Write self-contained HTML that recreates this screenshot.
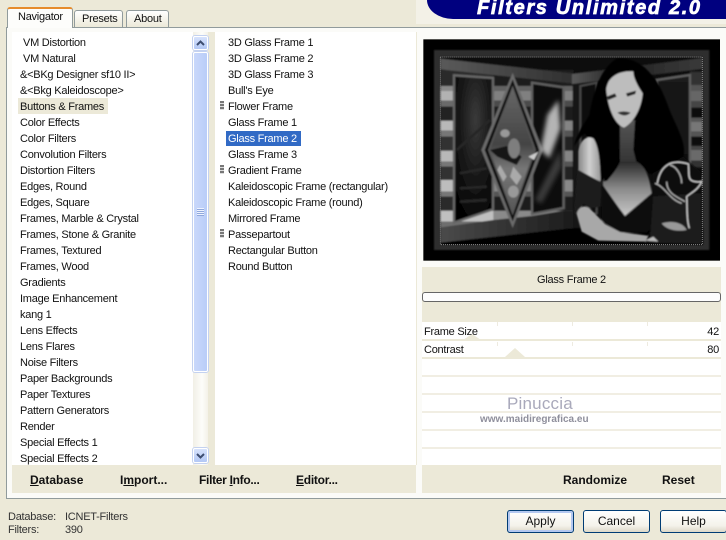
<!DOCTYPE html>
<html><head><meta charset="utf-8">
<style>
*{box-sizing:border-box}
html,body{margin:0;padding:0}
body{width:726px;height:540px;overflow:hidden;background:#ece9d8;position:relative;font-family:"Liberation Sans",sans-serif;font-size:11px;color:#111}
.a{position:absolute}
.t{position:absolute;white-space:nowrap;line-height:18px;height:16px;letter-spacing:-.25px}
.b{font-weight:bold;font-size:12px;color:#111;line-height:16px;letter-spacing:0}
.b u{text-decoration:underline}
.btn{position:absolute;top:510px;height:23px;border:1px solid #003c74;border-radius:3px;background:linear-gradient(#fff,#f4f2ea 70%,#dcd8c8);text-align:center;font-size:12px;line-height:21px;color:#111}
.row{position:absolute;left:422px;width:299px;height:2px;background:#f1eee3}
.tick{position:absolute;width:1px;height:4px;background:#eeebe0}
.sb{position:absolute;left:193px;width:15px;border:1px solid #fff;border-radius:2px;background:linear-gradient(90deg,#c9d8fb,#b9cdf8);box-shadow:0 0 0 1px #c4d2f0}
.bul{position:absolute;left:220px;width:4px;height:9px;background:repeating-linear-gradient(#777 0 2px,#ddd 2px 3px)}
</style></head><body>
<!-- banner -->
<div class="a" style="left:416px;top:0;width:310px;height:24px;background:#f3f1e7"></div>
<div class="a" style="left:427px;top:0;width:299px;height:19px;background:#00007f;border-bottom-left-radius:26px 19px"></div>
<div class="t" style="left:477px;top:-2px;height:20px;line-height:20px;color:#fff;font-weight:bold;font-style:italic;font-size:20px;letter-spacing:1.65px;-webkit-text-stroke:.7px #fff">Filters Unlimited 2.0</div>

<!-- tab panel -->
<div class="a" style="left:6px;top:27px;width:730px;height:472px;border:1px solid #919b9c;background:#fbfbf8"></div>

<!-- tabs -->
<div class="a" style="left:74px;top:10px;width:49px;height:17px;border:1px solid #919b9c;border-bottom:0;border-radius:3px 3px 0 0;background:linear-gradient(#fff,#ece9d8)"></div>
<div class="a" style="left:126px;top:10px;width:43px;height:17px;border:1px solid #919b9c;border-bottom:0;border-radius:3px 3px 0 0;background:linear-gradient(#fff,#ece9d8)"></div>
<div class="a" style="left:7px;top:7px;width:66px;height:21px;background:#fdfdfb;border:1px solid #919b9c;border-top:2px solid #e68b2c;border-bottom:0;border-radius:3px 3px 0 0"></div>
<div class="t" style="left:18px;top:8px">Navigator</div>
<div class="t" style="left:82px;top:10px">Presets</div>
<div class="t" style="left:134px;top:10px">About</div>

<!-- list backgrounds -->
<div class="a" style="left:12px;top:32px;width:181px;height:433px;background:#fff"></div>
<div class="a" style="left:208px;top:32px;width:7px;height:433px;background:#ece9d8"></div>
<div class="a" style="left:215px;top:32px;width:201px;height:433px;background:#fff"></div>
<div class="a" style="left:416px;top:32px;width:1px;height:433px;background:#ece9d8"></div>

<!-- scrollbar -->
<div class="a" style="left:193px;top:32px;width:15px;height:433px;background:linear-gradient(90deg,#f1efe6,#fdfdfa 60%,#f3f1e8)"></div>
<div class="sb" style="top:52px;height:320px"></div>
<div class="sb" style="top:36px;height:14px;background:linear-gradient(#d6e2fc,#b3c8f5)"></div>
<div class="sb" style="top:448px;height:15px;background:linear-gradient(#d6e2fc,#b3c8f5)"></div>
<svg class="a" style="left:193px;top:36px" width="15" height="14"><path d="M4 9 7.5 5.5 11 9" fill="none" stroke="#3d4d70" stroke-width="2"/></svg>
<svg class="a" style="left:193px;top:448px" width="15" height="15"><path d="M4 6 7.5 9.5 11 6" fill="none" stroke="#3d4d70" stroke-width="2"/></svg>
<div class="a" style="left:197px;top:208px;width:7px;height:8px;background:repeating-linear-gradient(#eef3ff 0 1px,#8fa8dd 1px 2px)"></div>

<!-- left list -->
<div class="a" style="left:18px;top:98px;width:90px;height:16px;background:#ece9d8"></div>
<div class="t" style="left:23px;top:34px">VM Distortion</div>
<div class="t" style="left:23px;top:50px">VM Natural</div>
<div class="t" style="left:20px;top:66px">&amp;&lt;BKg Designer sf10 II&gt;</div>
<div class="t" style="left:20px;top:82px">&amp;&lt;Bkg Kaleidoscope&gt;</div>
<div class="t" style="left:20px;top:98px">Buttons &amp; Frames</div>
<div class="t" style="left:20px;top:114px">Color Effects</div>
<div class="t" style="left:20px;top:130px">Color Filters</div>
<div class="t" style="left:20px;top:146px">Convolution Filters</div>
<div class="t" style="left:20px;top:162px">Distortion Filters</div>
<div class="t" style="left:20px;top:178px">Edges, Round</div>
<div class="t" style="left:20px;top:194px">Edges, Square</div>
<div class="t" style="left:20px;top:210px">Frames, Marble &amp; Crystal</div>
<div class="t" style="left:20px;top:226px">Frames, Stone &amp; Granite</div>
<div class="t" style="left:20px;top:242px">Frames, Textured</div>
<div class="t" style="left:20px;top:258px">Frames, Wood</div>
<div class="t" style="left:20px;top:274px">Gradients</div>
<div class="t" style="left:20px;top:290px">Image Enhancement</div>
<div class="t" style="left:20px;top:306px">kang 1</div>
<div class="t" style="left:20px;top:322px">Lens Effects</div>
<div class="t" style="left:20px;top:338px">Lens Flares</div>
<div class="t" style="left:20px;top:354px">Noise Filters</div>
<div class="t" style="left:20px;top:370px">Paper Backgrounds</div>
<div class="t" style="left:20px;top:386px">Paper Textures</div>
<div class="t" style="left:20px;top:402px">Pattern Generators</div>
<div class="t" style="left:20px;top:418px">Render</div>
<div class="t" style="left:20px;top:434px">Special Effects 1</div>
<div class="t" style="left:20px;top:450px">Special Effects 2</div>

<!-- middle list -->
<div class="a" style="left:226px;top:131px;width:75px;height:15px;background:#316ac5"></div>
<div class="bul" style="top:101px"></div>
<div class="bul" style="top:165px"></div>
<div class="bul" style="top:229px"></div>
<div class="t" style="left:228px;top:34px">3D Glass Frame 1</div>
<div class="t" style="left:228px;top:50px">3D Glass Frame 2</div>
<div class="t" style="left:228px;top:66px">3D Glass Frame 3</div>
<div class="t" style="left:228px;top:82px">Bull's Eye</div>
<div class="t" style="left:228px;top:98px">Flower Frame</div>
<div class="t" style="left:228px;top:114px">Glass Frame 1</div>
<div class="t" style="left:228px;top:130px;color:#fff">Glass Frame 2</div>
<div class="t" style="left:228px;top:146px">Glass Frame 3</div>
<div class="t" style="left:228px;top:162px">Gradient Frame</div>
<div class="t" style="left:228px;top:178px">Kaleidoscopic Frame (rectangular)</div>
<div class="t" style="left:228px;top:194px">Kaleidoscopic Frame (round)</div>
<div class="t" style="left:228px;top:210px">Mirrored Frame</div>
<div class="t" style="left:228px;top:226px">Passepartout</div>
<div class="t" style="left:228px;top:242px">Rectangular Button</div>
<div class="t" style="left:228px;top:258px">Round Button</div>

<!-- preview -->
<svg class="a" style="left:410px;top:0" width="316" height="270" viewBox="0 0 948 810">
<defs>
<filter id="s" x="-5%" y="-5%" width="110%" height="110%"><feGaussianBlur stdDeviation="2.2"/></filter>
<filter id="s2" x="-30%" y="-30%" width="160%" height="160%"><feGaussianBlur stdDeviation="7"/></filter>
<radialGradient id="door" cx=".55" cy=".3" r=".7"><stop offset="0" stop-color="#3a3a3a"/><stop offset=".55" stop-color="#191919"/><stop offset="1" stop-color="#050505"/></radialGradient>
<linearGradient id="band" x1="0" y1="0" x2="1" y2="0"><stop offset="0" stop-color="#5a5a5a"/><stop offset="1" stop-color="#303030"/></linearGradient>
<linearGradient id="band2" x1="0" y1="0" x2="1" y2="0"><stop offset="0" stop-color="#5a5a5a"/><stop offset=".35" stop-color="#222"/><stop offset="1" stop-color="#3a3a3a"/></linearGradient>
<linearGradient id="floor" x1="0" y1="0" x2="1" y2="0"><stop offset="0" stop-color="#4a4a4a"/><stop offset="1" stop-color="#1c1c1c"/></linearGradient>
<linearGradient id="dia" x1="0" y1="0" x2="0" y2="1"><stop offset="0" stop-color="#666"/><stop offset=".45" stop-color="#444"/><stop offset=".65" stop-color="#777"/><stop offset="1" stop-color="#555"/></linearGradient>
<linearGradient id="skin" x1="0" y1="0" x2="1" y2="0"><stop offset="0" stop-color="#888"/><stop offset=".5" stop-color="#d0d0d0"/><stop offset="1" stop-color="#999"/></linearGradient>
<linearGradient id="chest" x1="0" y1="0" x2="0" y2="1"><stop offset="0" stop-color="#2a2a2a"/><stop offset=".5" stop-color="#8a8a8a"/><stop offset="1" stop-color="#c8c8c8"/></linearGradient>
<linearGradient id="neck" x1="0" y1="0" x2="0" y2="1"><stop offset="0" stop-color="#555"/><stop offset="1" stop-color="#333"/></linearGradient>
<linearGradient id="rdoor" x1="0" y1="0" x2="0" y2="1"><stop offset="0" stop-color="#1a1a1a"/><stop offset="1" stop-color="#0a0a0a"/></linearGradient>
</defs>
<rect x="40" y="118" width="890" height="664" fill="#000"/>
<g filter="url(#s)">
<rect x="72" y="150" width="826" height="600" fill="#2e2e2e"/>
<rect x="90" y="170" width="788" height="565" fill="#0a0a0a"/>
<!-- stripes left -->
<g>
<rect x="92" y="210" width="398" height="48" fill="#2c2c2c"/>
<rect x="92" y="258" width="398" height="14" fill="#888"/><rect x="92" y="272" width="398" height="30" fill="#b2b2b2"/><rect x="92" y="302" width="398" height="18" fill="#6a6a6a"/><rect x="92" y="320" width="398" height="42" fill="#242424"/>
<rect x="92" y="362" width="398" height="30" fill="#b8b8b8"/><rect x="92" y="392" width="398" height="18" fill="#777"/><rect x="92" y="410" width="398" height="42" fill="#333"/>
<rect x="92" y="452" width="398" height="33" fill="#b8b8b8"/><rect x="92" y="485" width="398" height="15" fill="#777"/><rect x="92" y="500" width="398" height="40" fill="#333"/>
<rect x="92" y="540" width="398" height="35" fill="#bdbdbd"/><rect x="92" y="575" width="398" height="15" fill="#777"/><rect x="92" y="590" width="398" height="42" fill="#2c2c2c"/>
<rect x="92" y="632" width="398" height="33" fill="#c0c0c0"/><rect x="92" y="665" width="398" height="20" fill="#6e6e6e"/>
<rect x="250" y="210" width="240" height="475" fill="#000" opacity=".28"/>
</g>
<!-- stripes right -->
<g>
<rect x="840" y="215" width="36" height="40" fill="#333"/><rect x="840" y="255" width="36" height="18" fill="#555"/><rect x="840" y="273" width="36" height="30" fill="#666"/><rect x="840" y="303" width="36" height="20" fill="#444"/><rect x="840" y="323" width="36" height="30" fill="#111"/><rect x="840" y="353" width="36" height="12" fill="#555"/><rect x="840" y="365" width="36" height="30" fill="#777"/><rect x="840" y="395" width="36" height="15" fill="#555"/><rect x="840" y="410" width="36" height="28" fill="#0c0c0c"/><rect x="840" y="438" width="36" height="12" fill="#444"/><rect x="840" y="450" width="36" height="32" fill="#6a6a6a"/><rect x="840" y="482" width="36" height="20" fill="#333"/><rect x="840" y="502" width="36" height="25" fill="#111"/><rect x="840" y="527" width="36" height="33" fill="#666"/><rect x="840" y="560" width="36" height="45" fill="#222"/>
</g>
<!-- wall right -->
<rect x="488" y="250" width="55" height="440" fill="#141414"/>
<polygon points="740,240 840,225 840,640 740,660" fill="url(#rdoor)" stroke="#5e5e5e" stroke-width="7"/>
<polygon points="511,258 560,248 560,640 511,650" fill="#0a0a0a" stroke="#4a4a4a" stroke-width="6"/>
<!-- top bands -->
<polygon points="92,176 486,220 486,250 92,208" fill="url(#band)"/>
<polygon points="486,222 876,174 876,207 486,252" fill="url(#band2)"/>
<!-- doors -->
<polygon points="132,226 249,234 249,628 132,668" fill="url(#door)" stroke="#666" stroke-width="7"/>
<path d="M140,450 240,360 M150,520 230,505 M150,565 230,560 M150,605 230,600" stroke="#262626" stroke-width="8" fill="none"/>
<polygon points="366,248 461,262 461,624 366,642" fill="#101010" stroke="#5e5e5e" stroke-width="7"/>
<!-- floor -->
<polygon points="92,682 250,660 365,648 462,632 490,632 490,684 92,728" fill="url(#floor)"/>
<polygon points="92,728 490,684 490,735 92,735" fill="#060606"/>
<polygon points="490,684 880,684 880,735 490,735" fill="#050505"/>
<!-- diamond -->
<polygon points="308,218 398,450 308,684 214,450" fill="#6a6a6a"/>
<polygon points="308,238 388,450 308,664 224,450" fill="#0c0c0c"/>
<polygon points="308,256 378,450 308,646 234,450" fill="#555"/>
<polygon points="308,264 372,450 308,638 240,450" fill="url(#dia)"/>
<polygon points="240,450 290,438 335,470 320,495 262,470" fill="#161616"/>
<ellipse cx="312" cy="445" rx="18" ry="30" fill="#7e7e7e"/>
<ellipse cx="285" cy="400" rx="14" ry="12" fill="#999"/>
<path d="M270,495 290,530 280,545 262,510Z M310,500 335,530 320,555 300,530Z" fill="#aaa"/>
<ellipse cx="310" cy="575" rx="16" ry="18" fill="#999"/>
<path d="M355,470 385,455 372,480Z" fill="#ccc"/>
</g>
<g filter="url(#s2)">
<path d="M412,345 445,300 452,385 418,475 392,450Z" fill="#b4b4b4"/>
<path d="M450,450 455,500 395,610 375,600Z" fill="#3a3a3a"/>
</g>
<!-- woman; zoom coords +480,+150 -->
<g transform="translate(480 150)" filter="url(#s)">
<path d="M140,26 C175,22 215,35 245,75 C275,110 285,145 305,195 C325,240 350,285 340,320 C310,360 270,385 240,370 L200,350 L110,375 L92,395 C75,320 60,275 45,250 C30,262 20,275 12,290 C18,255 40,225 58,195 C68,140 85,60 140,26Z" fill="#050505"/>
<path d="M25,305 C30,270 50,255 70,265 C88,290 90,340 92,395 L25,365Z" fill="url(#skin)"/>
<path d="M150,220 L195,210 L190,300 L200,340 L150,340Z" fill="url(#neck)"/>
<path d="M98,395 C110,372 135,352 150,335 L200,335 C220,345 238,370 245,430 L165,498 L100,412Z" fill="url(#chest)"/>
<path d="M150,335 C140,360 125,375 112,392 L100,395 L110,365Z" fill="#050505"/>
<path d="M200,335 C215,340 225,350 235,372 L250,372 L250,330Z" fill="#050505"/>
<path d="M108,112 C118,80 145,62 190,64 C190,85 205,110 218,130 C215,170 195,215 162,233 C130,220 112,165 108,112Z" fill="#bdbdbd"/>
<path d="M135,64 C120,80 110,105 108,120 L100,100 L115,70Z" fill="#050505"/>
<path d="M190,64 C205,85 215,115 222,130 L232,110 L205,60Z" fill="#050505"/>
<path d="M110,140 L135,130 L140,140 L115,150Z M168,130 L198,122 L196,132 L172,140Z" fill="#222"/>
<path d="M142,188 Q160,180 182,188 Q165,205 142,188Z" fill="#333"/>
<path d="M95,400 L165,500 L245,430 L252,525 L232,548 L150,548 L95,512Z" fill="#070707"/>
<path d="M12,490 L22,358 L95,398 L92,470 L60,475 L40,462 L18,490Z" fill="#1a1a1a"/>
<path d="M20,492 C25,470 45,462 62,478 L105,522 L150,546 L240,558 L228,575 L85,572 L35,545Z" fill="#a8a8a8"/>
<!-- rose -->
<path d="M248,370 L340,320 L396,370 L396,585 L225,580 L240,540Z" fill="#0c0c0c"/>
<path d="M250,440 L392,430 L396,580 L240,578Z" fill="#1e1e1e"/>
<path d="M262,400 C270,350 300,325 355,342 C360,375 345,400 395,395 C385,420 360,430 350,440 C352,480 350,510 358,535" fill="none" stroke="#d0d0d0" stroke-width="4"/>
<path d="M255,400 C285,410 300,450 335,460 M290,395 C290,430 320,440 345,455 M300,345 C320,350 335,375 335,400" fill="none" stroke="#bbb" stroke-width="3.5"/>
<path d="M275,520 C310,510 340,520 350,540 C320,545 290,540 275,520Z" fill="#999"/>
<path d="M225,572 L250,560 L265,575Z" fill="#bbb"/>
</g>
<rect x="91" y="171" width="786" height="563" fill="none" stroke="#8a8a8a" stroke-width="3" stroke-dasharray="3 3"/>
</svg>

<!-- params -->
<div class="a" style="left:422px;top:267px;width:299px;height:55px;background:#ece9d8"></div>
<div class="t" style="left:422px;width:299px;top:271px;text-align:center">Glass Frame 2</div>
<div class="a" style="left:422px;top:292px;width:299px;height:10px;border:1px solid #666;border-radius:3px;background:#fdfdfd"></div>
<div class="a" style="left:422px;top:322px;width:299px;height:143px;background:#fff"></div>
<div class="row" style="top:339px;background:#ece9d8"></div>
<div class="row" style="top:357px;background:#ece9d8"></div>
<div class="row" style="top:375px"></div>
<div class="row" style="top:393px"></div>
<div class="row" style="top:411px"></div>
<div class="row" style="top:429px"></div>
<div class="row" style="top:447px"></div>
<div class="tick" style="left:497px;top:322px"></div><div class="tick" style="left:572px;top:322px"></div><div class="tick" style="left:647px;top:322px"></div>
<div class="tick" style="left:497px;top:342px"></div><div class="tick" style="left:572px;top:342px"></div><div class="tick" style="left:647px;top:342px"></div>
<svg class="a" style="left:460px;top:332px" width="70" height="26"><path d="M3 8 12 2 21 8Z" fill="#ece9d8"/><path d="M45 25 55 16 65 25Z" fill="#ece9d8"/></svg>
<div class="t" style="left:424px;top:323px">Frame Size</div>
<div class="t" style="left:424px;top:341px">Contrast</div>
<div class="t" style="left:680px;width:39px;text-align:right;top:323px">42</div>
<div class="t" style="left:680px;width:39px;text-align:right;top:341px">80</div>
<!-- watermark -->
<div class="t" style="left:507px;top:394px;height:20px;line-height:20px;font-size:17px;letter-spacing:.2px;color:#a9a9bb;filter:blur(.3px)">Pinuccia</div>
<div class="t" style="left:480px;top:412px;line-height:16px;font-size:10px;font-weight:bold;letter-spacing:0;color:#8f8f9c;filter:blur(.3px)">www.maidiregrafica.eu</div>

<!-- bottom bars -->
<div class="a" style="left:12px;top:465px;width:404px;height:28px;background:#ece9d8"></div>
<div class="a" style="left:422px;top:465px;width:299px;height:28px;background:#ece9d8"></div>
<div class="t b" style="left:30px;top:472px"><u>D</u>atabase</div>
<div class="t b" style="left:120px;top:472px">I<u>m</u>port...</div>
<div class="t b" style="left:199px;top:472px;letter-spacing:-.3px">Filter <u>I</u>nfo...</div>
<div class="t b" style="left:296px;top:472px;letter-spacing:-.25px"><u>E</u>ditor...</div>
<div class="t b" style="left:563px;top:472px">Randomize</div>
<div class="t b" style="left:662px;top:472px">Reset</div>

<!-- status -->
<div class="t" style="left:8px;top:508px;color:#333">Database:</div>
<div class="t" style="left:65px;top:508px;color:#333">ICNET-Filters</div>
<div class="t" style="left:8px;top:521px;color:#333">Filters:</div>
<div class="t" style="left:65px;top:521px;color:#333">390</div>

<!-- buttons -->
<div class="btn" style="left:507px;width:67px;box-shadow:inset 0 0 0 2px #b4c8f0">Apply</div>
<div class="btn" style="left:583px;width:67px">Cancel</div>
<div class="btn" style="left:660px;width:67px">Help</div>
</body></html>
